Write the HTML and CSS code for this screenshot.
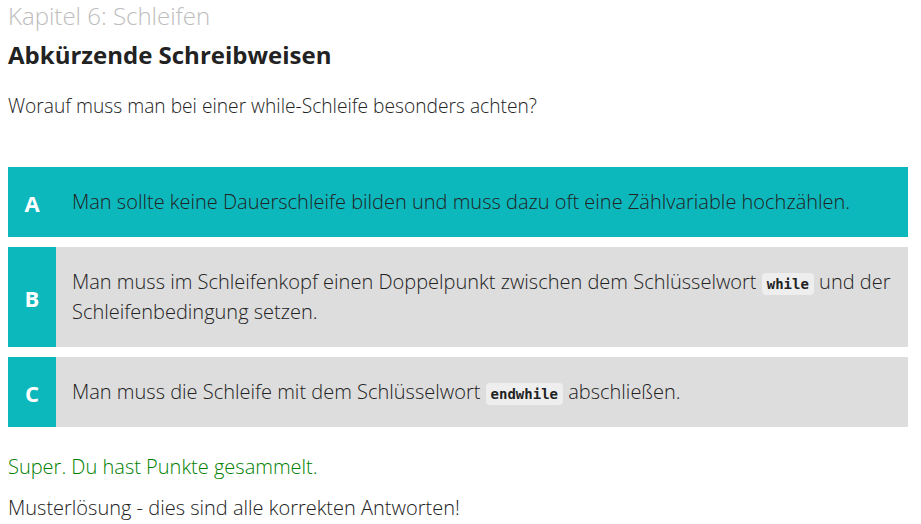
FILE: index.html
```html
<!DOCTYPE html>
<html lang="de">
<head>
<meta charset="utf-8">
<title>Kapitel 6: Schleifen</title>
<link rel="stylesheet" href="styles.css">
</head>
<body>
<main class="page">
  <div class="chapter">Kapitel 6: Schleifen</div>
  <h1 class="title">Abkürzende Schreibweisen</h1>
  <p class="question">Worauf muss man bei einer while-Schleife besonders achten?</p>

  <div class="options">
    <div class="option option-correct">
      <div class="letter">A</div>
      <div class="text">Man sollte keine Dauerschleife bilden und muss dazu oft eine Zählvariable hochzählen.</div>
    </div>
    <div class="option">
      <div class="letter">B</div>
      <div class="text">Man muss im Schleifenkopf einen Doppelpunkt zwischen dem Schlüsselwort <code>while</code> und der Schleifenbedingung setzen.</div>
    </div>
    <div class="option">
      <div class="letter">C</div>
      <div class="text">Man muss die Schleife mit dem Schlüsselwort <code>endwhile</code> abschließen.</div>
    </div>
  </div>

  <p class="success">Super. Du hast Punkte gesammelt.</p>
  <p class="solution">Musterlösung - dies sind alle korrekten Antworten!</p>
</main>
</body>
</html>
```

FILE: styles.css
```css
html, body {
  margin: 0;
  padding: 0;
  background: #ffffff;
}

body {
  font-family: "Open Sans", "Liberation Sans", sans-serif;
  color: #222222;
}

.page {
  width: 900px;
  padding: 1px 8px 0 8px;
}

.chapter {
  font-size: 24px;
  line-height: 29px;
  font-weight: 300;
  color: #bdbdbd;
}

.title {
  margin: 9px 0 0 0;
  font-size: 24px;
  line-height: 32px;
  font-weight: 700;
  color: #222222;
}

.question {
  margin: 20px 0 0 0;
  font-size: 19.2px;
  line-height: 30px;
  font-weight: 300;
}

.options {
  margin-top: 46px;
  display: flex;
  flex-direction: column;
  gap: 10px;
}

.option {
  display: flex;
  background: #dddddd;
}

.option-correct {
  background: #0db8bd;
}

.letter {
  flex: 0 0 48px;
  display: flex;
  align-items: center;
  justify-content: center;
  background: #0db8bd;
  color: #ffffff;
  font-size: 22px;
  font-weight: 700;
  padding-top: 2px;
}

.text {
  flex: 1;
  padding: 20px 16px;
  font-size: 20px;
  line-height: 30px;
  font-weight: 300;
  color: #222222;
}

code {
  font-family: "DejaVu Sans Mono", "Liberation Mono", monospace;
  font-size: 14px;
  line-height: 1;
  font-weight: 700;
  background: #eeeeee;
  border-radius: 4px;
  padding: 3px 5px;
  color: #222222;
}

.success {
  margin: 25px 0 0 0;
  font-size: 20px;
  line-height: 30px;
  font-weight: 300;
  color: #008000;
}

.solution {
  margin: 11px 0 0 0;
  font-size: 20px;
  line-height: 30px;
  font-weight: 300;
}
```
